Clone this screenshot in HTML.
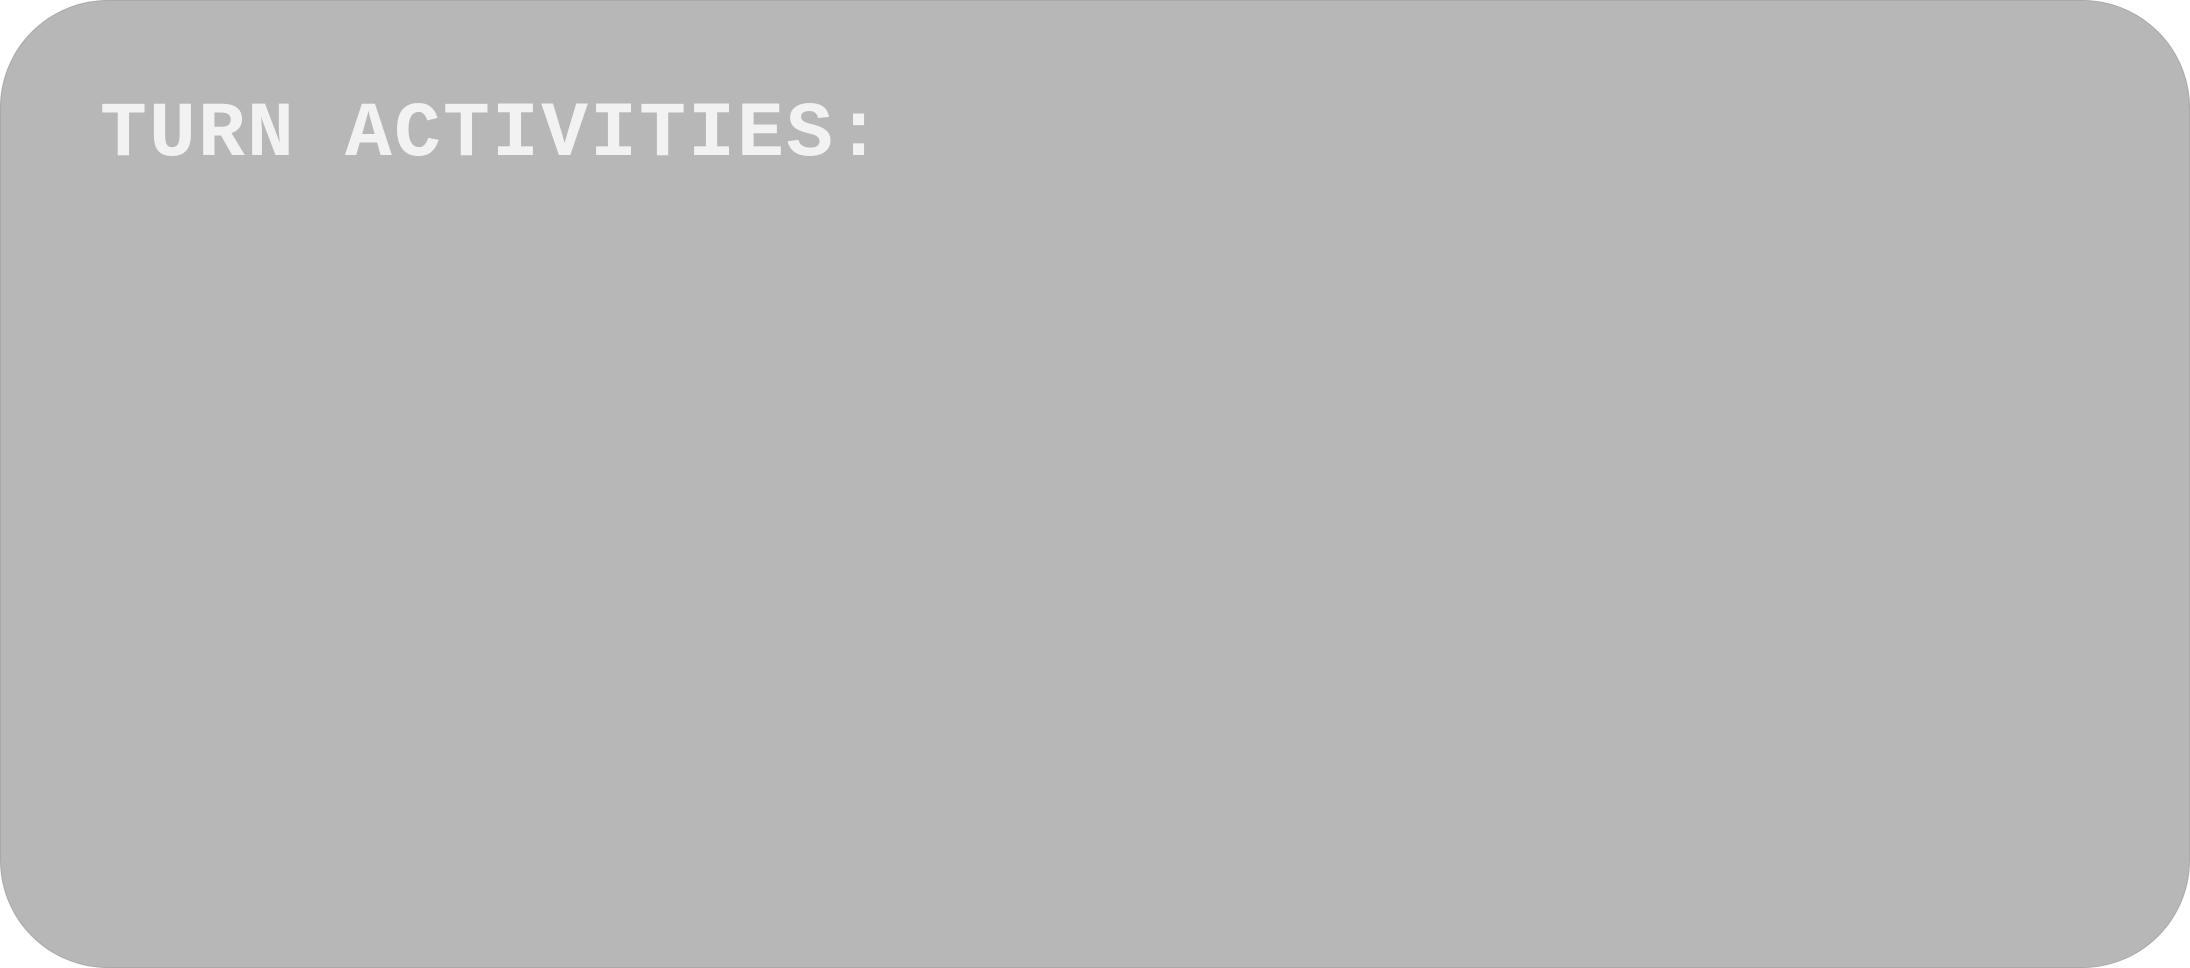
<!DOCTYPE html>
<html>
<head>
<meta charset="utf-8">
<style>
html,body{margin:0;padding:0;background:#ffffff;}
body{width:2190px;height:968px;overflow:hidden;position:relative;}
.card{position:absolute;left:0;top:0;width:2188px;height:966px;background:#b7b7b7;border:1px solid #a9a9a9;border-radius:108px;}
.title{position:absolute;left:100px;top:96px;font-family:"Liberation Mono",monospace;font-weight:bold;font-size:78px;line-height:78px;letter-spacing:2.2px;color:#f2f2f2;white-space:pre;}
</style>
</head>
<body>
<div class="card"></div>
<div class="title">TURN ACTIVITIES:</div>
</body>
</html>
